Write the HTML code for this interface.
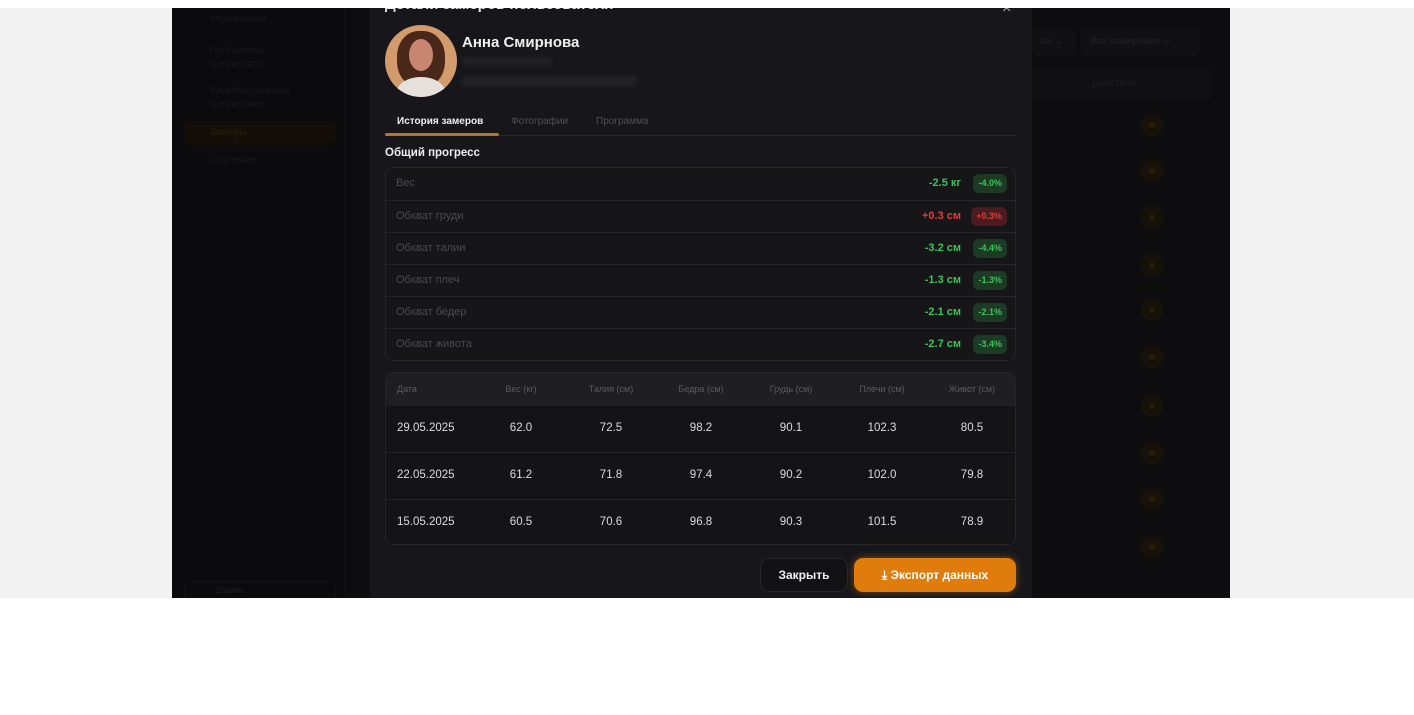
<!DOCTYPE html>
<html><head><meta charset="utf-8"><style>
*{margin:0;padding:0;box-sizing:border-box}
body{width:1414px;height:715px;background:#fff;position:relative;overflow:hidden;font-family:"Liberation Sans","DejaVu Sans",sans-serif}
.a{position:absolute}
.side{background:#f2f2f2}
.lbl{position:absolute;left:10px;font-size:11px;color:#4a4a50}
.row{position:absolute;left:0;right:0;height:32px;border-top:1px solid #25252a}
.val{position:absolute;right:54px;top:9px;font-size:11px;font-weight:bold;color:#37c45a}
.bd{position:absolute;right:8px;top:6px;height:19px;padding:0 5px;border-radius:6px;background:#1d3a24;color:#37c45a;font-size:9px;line-height:19px;font-weight:bold}
.red .val{color:#e23b3b}.red .bd{background:#4a1c1f;color:#e23b3b}
.th{position:absolute;top:11px;font-size:9px;color:#5a5a60;transform:translateX(-50%);white-space:nowrap}
.td{position:absolute;font-size:11.5px;color:#ddd;transform:translateX(-50%);white-space:nowrap}
.dot{position:absolute;left:1140px;width:24px;height:24px;border-radius:50%;background:#161109}
.dot:after{content:"";position:absolute;left:9px;top:9px;width:6px;height:6px;border-radius:50%;background:#2a1c08}
</style></head><body>
<div class="a side" style="left:0;top:8px;width:172px;height:590px"></div>
<div class="a side" style="left:1230px;top:8px;width:184px;height:590px"></div>
<div class="a" style="left:172px;top:8px;width:1058px;height:590px;background:#0d0d0f;overflow:hidden">
 <div class="a" style="left:0;top:0;width:173px;height:590px;background:#0b0b0d;border-right:1px solid #121214"></div>
 <div class="a" style="left:38px;top:6px;font-size:10px;color:#19191c">Упражнения</div>
 <div class="a" style="left:38px;top:36px;font-size:10px;color:#19191c;line-height:14px">Программы<br>тренировок</div>
 <div class="a" style="left:38px;top:76px;font-size:10px;color:#19191c;line-height:14px">Индивидуальные<br>тренировки</div>
 <div class="a" style="left:12px;top:113px;width:152px;height:24px;border-radius:6px;background:#130e08"></div>
 <div class="a" style="left:38px;top:119px;font-size:10px;color:#2e1f08">Замеры</div>
 <div class="a" style="left:38px;top:147px;font-size:10px;color:#19191c">Обучение</div>
 <div class="a" style="left:12px;top:573px;width:152px;height:30px;border-radius:8px;border:1px solid #151517"></div>
 <div class="a" style="left:44px;top:578px;font-size:8px;color:#222225">Zaharlo</div>
 <div class="a" style="left:860px;top:20px;width:44px;height:28px;border-radius:8px;background:#111113"></div>
 <div class="a" style="left:868px;top:28px;font-size:10px;color:#232326">ли ⌄</div>
 <div class="a" style="left:908px;top:20px;width:120px;height:28px;border-radius:8px;background:#111113"></div>
 <div class="a" style="left:918px;top:28px;font-size:10px;color:#232326">Все измерения ⌄</div>
 <div class="a" style="left:860px;top:60px;width:180px;height:30px;background:#101012"></div>
 <div class="a" style="left:920px;top:70px;font-size:10px;color:#1e1e21">Действие</div>
</div>
<div class="dot" style="top:113px"></div><div class="dot" style="top:159px"></div><div class="dot" style="top:205px"></div><div class="dot" style="top:253px"></div><div class="dot" style="top:298px"></div><div class="dot" style="top:345px"></div><div class="dot" style="top:394px"></div><div class="dot" style="top:441px"></div><div class="dot" style="top:487px"></div><div class="dot" style="top:535px"></div>

<div class="a" style="left:370px;top:8px;width:662px;height:590px;background:#17171b;overflow:hidden">
 <div class="a" style="left:15px;top:-12px;font-size:15px;font-weight:bold;color:#e8e8e8">Детали замеров пользователя</div>
 <div class="a" style="left:632px;top:-8px;font-size:16px;color:#aaa">×</div>
 <div class="a" style="left:15px;top:17px;width:72px;height:72px;border-radius:50%;background:#d39a6e;overflow:hidden">
  <div class="a" style="left:12px;top:6px;width:48px;height:56px;border-radius:45%;background:#4a2819"></div>
  <div class="a" style="left:24px;top:14px;width:24px;height:32px;border-radius:50%;background:#c88670"></div>
  <div class="a" style="left:12px;top:52px;width:48px;height:30px;border-radius:50%;background:#e6e1dc"></div>
 </div>
 <div class="a" style="left:92px;top:26px;font-size:15px;font-weight:bold;color:#f0f0f0">Анна Смирнова</div>
 <div class="a" style="left:92px;top:49px;width:90px;height:9px;background:#222226;border-radius:4px;filter:blur(2px)"></div>
 <div class="a" style="left:92px;top:68px;width:175px;height:10px;background:#232327;border-radius:4px;filter:blur(2px)"></div>
 <div class="a" style="left:27px;top:108px;font-size:10px;font-weight:bold;color:#eee">История замеров</div>
 <div class="a" style="left:141px;top:108px;font-size:10px;color:#4e4e54">Фотографии</div>
 <div class="a" style="left:226px;top:108px;font-size:10px;color:#4e4e54">Программа</div>
 <div class="a" style="left:15px;top:127px;width:631px;height:1px;background:#25252a"></div>
 <div class="a" style="left:15px;top:125px;width:114px;height:3px;background:#b87420;border-radius:2px"></div>
 <div class="a" style="left:15px;top:139px;font-size:11.5px;font-weight:bold;color:#eee">Общий прогресс</div>
 <div class="a" style="left:15px;top:159px;width:631px;height:194px;border:1px solid #25252a;border-radius:8px;background:#161619;overflow:hidden">
  <div class="row" style="top:0;border-top:0"><span class="lbl" style="top:9px">Вес</span><span class="val">-2.5 кг</span><span class="bd">-4.0%</span></div>
  <div class="row red" style="top:32px"><span class="lbl" style="top:9px">Обхват груди</span><span class="val">+0.3 см</span><span class="bd">+0.3%</span></div>
  <div class="row" style="top:64px"><span class="lbl" style="top:9px">Обхват талии</span><span class="val">-3.2 см</span><span class="bd">-4.4%</span></div>
  <div class="row" style="top:96px"><span class="lbl" style="top:9px">Обхват плеч</span><span class="val">-1.3 см</span><span class="bd">-1.3%</span></div>
  <div class="row" style="top:128px"><span class="lbl" style="top:9px">Обхват бедер</span><span class="val">-2.1 см</span><span class="bd">-2.1%</span></div>
  <div class="row" style="top:160px"><span class="lbl" style="top:9px">Обхват живота</span><span class="val">-2.7 см</span><span class="bd">-3.4%</span></div>
 </div>
 <div class="a" style="left:15px;top:364px;width:631px;height:173px;border:1px solid #25252a;border-radius:8px;background:#141417;overflow:hidden">
  <div class="a" style="left:0;top:0;width:631px;height:33px;background:#1f1f23"></div>
  <span class="th" style="transform:none;left:11px">Дата</span>
  <span class="th" style="left:135px">Вес (кг)</span><span class="th" style="left:225px">Талия (см)</span><span class="th" style="left:315px">Бедра (см)</span><span class="th" style="left:405px">Грудь (см)</span><span class="th" style="left:496px">Плечи (см)</span><span class="th" style="left:586px">Живот (см)</span>
  <div class="a" style="left:0;top:79px;width:631px;height:1px;background:#222226"></div>
  <div class="a" style="left:0;top:126px;width:631px;height:1px;background:#222226"></div>
  <span class="td" style="left:11px;transform:none;top:49px">29.05.2025</span><span class="td" style="left:135px;top:49px">62.0</span><span class="td" style="left:225px;top:49px">72.5</span><span class="td" style="left:315px;top:49px">98.2</span><span class="td" style="left:405px;top:49px">90.1</span><span class="td" style="left:496px;top:49px">102.3</span><span class="td" style="left:586px;top:49px">80.5</span>
  <span class="td" style="left:11px;transform:none;top:96px">22.05.2025</span><span class="td" style="left:135px;top:96px">61.2</span><span class="td" style="left:225px;top:96px">71.8</span><span class="td" style="left:315px;top:96px">97.4</span><span class="td" style="left:405px;top:96px">90.2</span><span class="td" style="left:496px;top:96px">102.0</span><span class="td" style="left:586px;top:96px">79.8</span>
  <span class="td" style="left:11px;transform:none;top:143px">15.05.2025</span><span class="td" style="left:135px;top:143px">60.5</span><span class="td" style="left:225px;top:143px">70.6</span><span class="td" style="left:315px;top:143px">96.8</span><span class="td" style="left:405px;top:143px">90.3</span><span class="td" style="left:496px;top:143px">101.5</span><span class="td" style="left:586px;top:143px">78.9</span>
 </div>
 <div class="a" style="left:390px;top:550px;width:88px;height:34px;border:1px solid #26262a;border-radius:9px;background:#121215;color:#f0f0f0;font-size:12px;font-weight:bold;text-align:center;line-height:32px">Закрыть</div>
 <div class="a" style="left:484px;top:550px;width:162px;height:34px;border-radius:9px;background:#e07c0c;box-shadow:0 0 8px rgba(224,124,12,.5);color:#fff;font-size:12px;font-weight:bold;text-align:center;line-height:34px">⤓ Экспорт данных</div>
</div>
</body></html>
